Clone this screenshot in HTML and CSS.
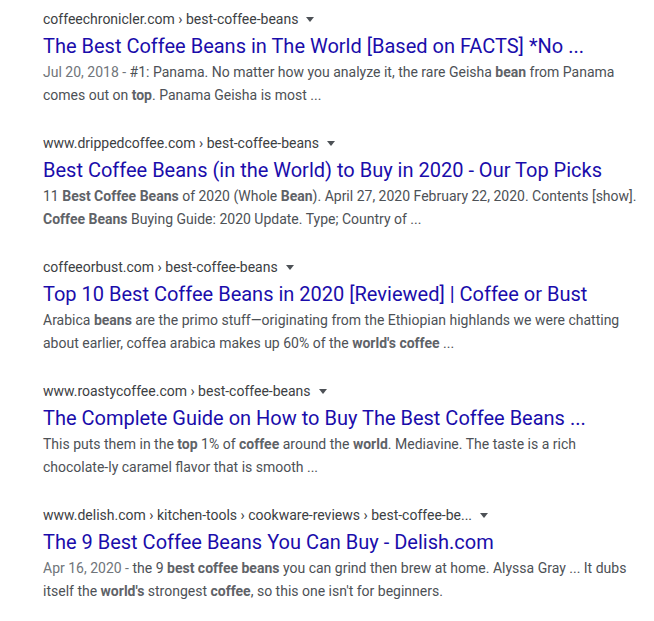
FILE: index.html
```html
<!DOCTYPE html>
<html>
<head>
<meta charset="utf-8">
<link rel="stylesheet" href="styles.css">
</head>
<body>
<div class="results">
  <div class="result">
    <div class="url"><span>coffeechronicler.com › best-coffee-beans</span><span class="arrow"></span></div>
    <div class="title">The Best Coffee Beans in The World [Based on FACTS] *No ...</div>
    <div class="snippet"><span class="date">Jul 20, 2018 - </span>#1: Panama. No matter how you analyze it, the rare Geisha <b>bean</b> from Panama comes out on <b>top</b>. Panama Geisha is most ...</div>
  </div>
  <div class="result">
    <div class="url"><span>www.drippedcoffee.com › best-coffee-beans</span><span class="arrow"></span></div>
    <div class="title">Best Coffee Beans (in the World) to Buy in 2020 - Our Top Picks</div>
    <div class="snippet">11 <b>Best Coffee Beans</b> of 2020 (Whole <b>Bean</b>). April 27, 2020 February 22, 2020. Contents [show]. <b>Coffee Beans</b> Buying Guide: 2020 Update. Type; Country of ...</div>
  </div>
  <div class="result">
    <div class="url"><span>coffeeorbust.com › best-coffee-beans</span><span class="arrow"></span></div>
    <div class="title">Top 10 Best Coffee Beans in 2020 [Reviewed] | Coffee or Bust</div>
    <div class="snippet">Arabica <b>beans</b> are the primo stuff—originating from the Ethiopian highlands we were chatting about earlier, coffea arabica makes up 60% of the <b>world's coffee</b> ...</div>
  </div>
  <div class="result">
    <div class="url"><span>www.roastycoffee.com › best-coffee-beans</span><span class="arrow"></span></div>
    <div class="title">The Complete Guide on How to Buy The Best Coffee Beans ...</div>
    <div class="snippet">This puts them in the <b>top</b> 1% of <b>coffee</b> around the <b>world</b>. Mediavine. The taste is a rich chocolate-ly caramel flavor that is smooth ...</div>
  </div>
  <div class="result">
    <div class="url"><span>www.delish.com › kitchen-tools › cookware-reviews › best-coffee-be...</span><span class="arrow"></span></div>
    <div class="title">The 9 Best Coffee Beans You Can Buy - Delish.com</div>
    <div class="snippet"><span class="date">Apr 16, 2020 - </span>the 9 <b>best coffee beans</b> you can grind then brew at home. Alyssa Gray ... It dubs itself the <b>world's</b> strongest <b>coffee</b>, so this one isn't for beginners.</div>
  </div>
</div>
</body>
</html>
```

FILE: styles.css
```css
html, body {
  margin: 0;
  padding: 0;
  background: #ffffff;
}
body {
  font-family: Roboto, Arial, sans-serif;
}
.results {
  padding: 9px 0 0 43px;
  width: 600px;
  display: flex;
  flex-direction: column;
  gap: 26px;
}
.result {
  display: flex;
  flex-direction: column;
}
.url {
  font-size: 14px;
  line-height: 20px;
  color: #3c4043;
  display: flex;
  align-items: center;
}
.arrow {
  display: inline-block;
  margin-left: 8px;
  width: 0;
  height: 0;
  border-left: 4px solid transparent;
  border-right: 4px solid transparent;
  border-top: 5px solid #4d5156;
}
.title {
  margin-top: 4px;
  font-size: 20px;
  line-height: 26px;
  color: #1a0dab;
}
.snippet {
  margin-top: 2px;
  font-size: 14px;
  line-height: 23px;
  color: #4d5156;
}
.snippet b {
  font-weight: 700;
  color: #5f6368;
}
.date {
  color: #70757a;
}
```
